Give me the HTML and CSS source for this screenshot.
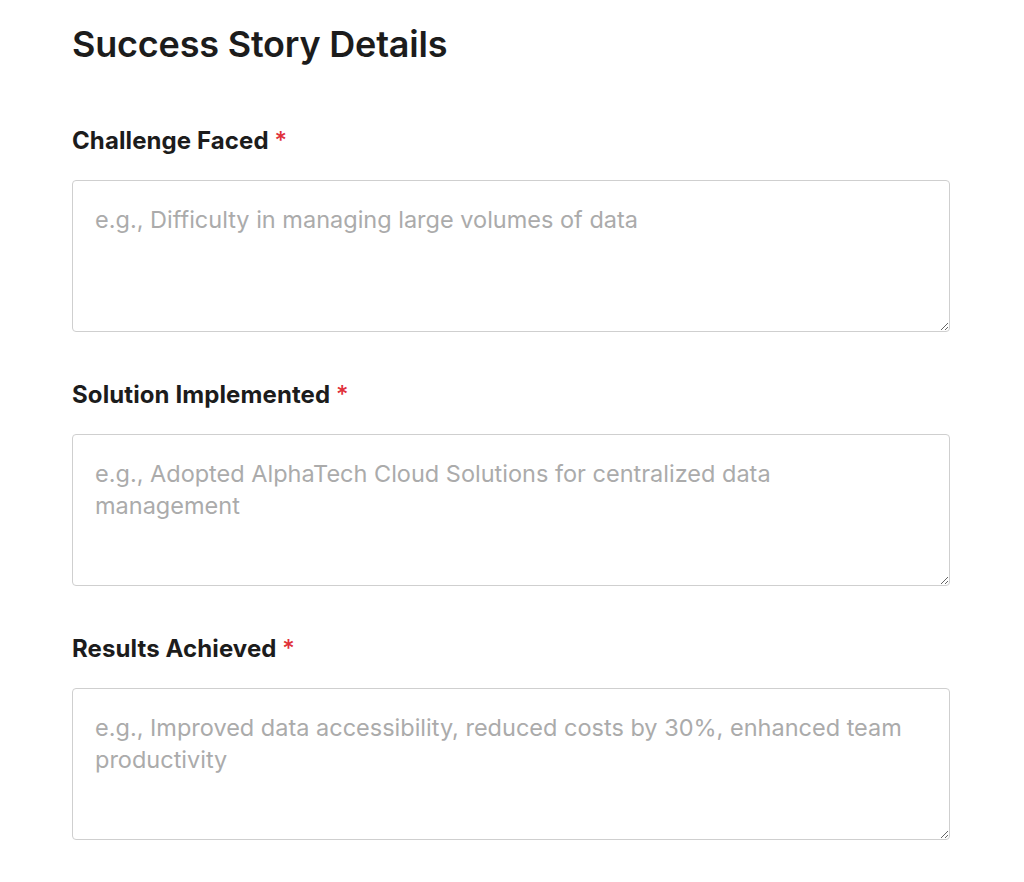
FILE: index.html
```html
<!DOCTYPE html>
<html lang="en">
<head>
    <meta charset="UTF-8">
    <meta name="viewport" content="width=device-width, initial-scale=1.0">
    <title>Success Story Details</title>
    <link rel="stylesheet" href="styles.css">
</head>
<body>
    <form class="story-form">
        <h2>Success Story Details</h2>

        <div class="field">
            <label for="challenge">Challenge Faced <span class="req">*</span></label>
            <textarea id="challenge" name="challenge" placeholder="e.g., Difficulty in managing large volumes of data" required></textarea>
        </div>

        <div class="field">
            <label for="solution">Solution Implemented <span class="req">*</span></label>
            <textarea id="solution" name="solution" placeholder="e.g., Adopted AlphaTech Cloud Solutions for centralized data management" required></textarea>
        </div>

        <div class="field">
            <label for="results">Results Achieved <span class="req">*</span></label>
            <textarea id="results" name="results" placeholder="e.g., Improved data accessibility, reduced costs by 30%, enhanced team productivity" required></textarea>
        </div>
    </form>
</body>
</html>
```

FILE: styles.css
```css
body {
    margin: 0;
    font-family: Inter, "Noto Sans", sans-serif;
    color: #1c1c1c;
    background: #fff;
}
.story-form {
    width: 878px;
    padding: 22px 0 0 72px;
}
.story-form h2 {
    font-size: 36px;
    line-height: 44px;
    font-weight: 600;
    letter-spacing: -0.2px;
    margin: 0 0 60px;
}
.field {
    margin-bottom: 48px;
}
.field label {
    display: block;
    font-size: 24px;
    line-height: 30px;
    font-weight: 700;
    letter-spacing: 0.1px;
    margin-bottom: 24px;
}
.req {
    color: #e0303a;
    font-weight: 500;
}
.field textarea {
    display: block;
    box-sizing: border-box;
    width: 100%;
    height: 152px;
    padding: 23px 36px 23px 22px;
    border: 1px solid #cfcfcf;
    border-radius: 4px;
    font-family: inherit;
    font-size: 23.5px;
    line-height: 32px;
    color: #333;
}
.field textarea::placeholder {
    color: #ababab;
}
```
